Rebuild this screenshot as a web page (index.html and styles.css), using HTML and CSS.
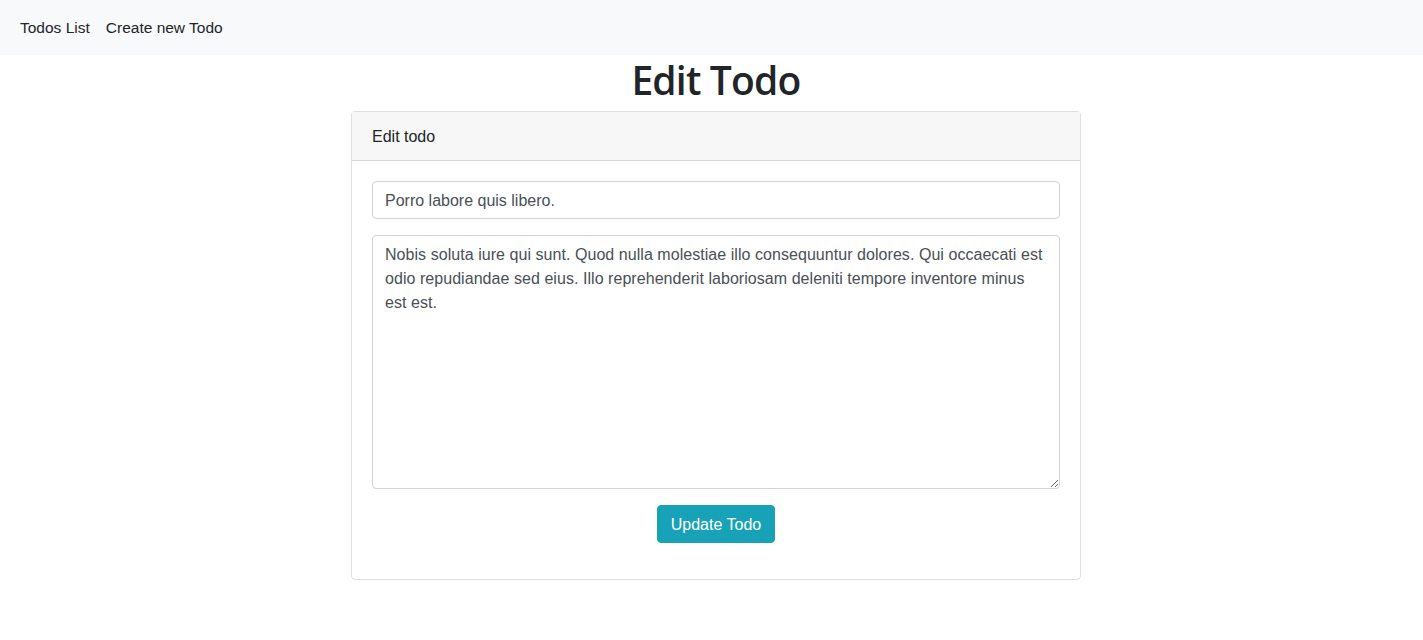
FILE: index.html
```html
<!DOCTYPE html>
<html lang="en">
<head>
<meta charset="utf-8">
<title>Edit Todo</title>
<link rel="stylesheet" href="styles.css">
</head>
<body>
<nav class="navbar">
  <a class="nav-link" href="#">Todos List</a>
  <a class="nav-link" href="#">Create new Todo</a>
</nav>
<main class="container">
  <h1 class="title">Edit Todo</h1>
  <div class="card">
    <div class="card-header">Edit todo</div>
    <form class="card-body">
      <input class="form-control" type="text" value="Porro labore quis libero.">
      <textarea class="form-control textarea">Nobis soluta iure qui sunt. Quod nulla molestiae illo consequuntur dolores. Qui occaecati est odio repudiandae sed eius. Illo reprehenderit laboriosam deleniti tempore inventore minus est est.</textarea>
      <div class="actions">
        <button class="btn" type="button">Update Todo</button>
      </div>
    </form>
  </div>
</main>
</body>
</html>
```
FILE: styles.css
```css
* { box-sizing: border-box; }
html, body { margin: 0; padding: 0; }
body {
  font-family: "Liberation Sans", Arial, sans-serif;
  font-size: 16px;
  line-height: 1.5;
  color: #212529;
  background: #fff;
}
.navbar {
  height: 55px;
  background: #f8f9fa;
  display: flex;
  align-items: center;
  padding: 1px 20px 0;
  gap: 16px;
}
.nav-link {
  color: #212529;
  text-decoration: none;
  font-size: 15.5px;
}
.container {
  width: 730px;
  margin-left: calc(50% - 360.5px);
}
.title {
  margin: 0 0 8px;
  height: 48px;
  font-family: "Open Sans", "Liberation Sans", sans-serif;
  font-size: 39px;
  line-height: 50px;
  font-weight: 600;
  letter-spacing: -0.8px;
  text-align: center;
}
.card {
  border: 1px solid rgba(0,0,0,.125);
  border-radius: 4px;
}
.card-header {
  background: #f7f7f7;
  border-bottom: 1px solid rgba(0,0,0,.125);
  padding: 13px 20px 11px;
  font-size: 16px;
  line-height: 24px;
}
.card-body {
  padding: 20px;
  display: flex;
  flex-direction: column;
  gap: 16px;
  margin: 0;
}
.form-control {
  display: block;
  width: 100%;
  height: 38px;
  padding: 7px 12px 5px;
  font-family: inherit;
  font-size: 16px;
  line-height: 24px;
  color: #495057;
  background: #fff;
  border: 1px solid #ced4da;
  border-radius: 4px;
  margin: 0;
}
.textarea {
  height: 254px;
  resize: vertical;
  letter-spacing: 0.05px;
}
.actions {
  display: flex;
  justify-content: center;
  padding-bottom: 16px;
}
.btn {
  height: 38px;
  width: 118px;
  padding: 7px 12px 5px;
  font-family: inherit;
  font-size: 16px;
  line-height: 24px;
  color: #fff;
  background: #17a2b8;
  border: 1px solid #17a2b8;
  border-radius: 4px;
  cursor: pointer;
}
```
